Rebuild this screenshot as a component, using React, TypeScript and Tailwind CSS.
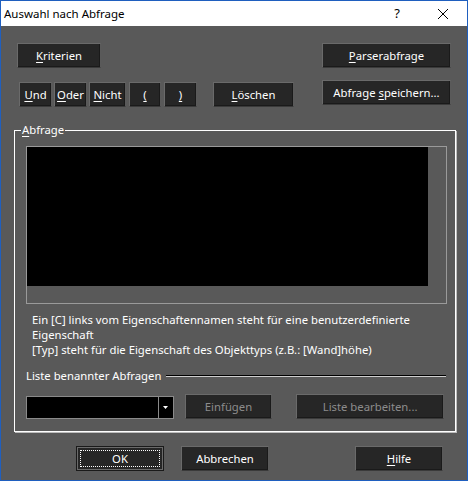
import React from "react";

const U = ({ c }: { c: string }) => <span className="underline underline-offset-2">{c}</span>;

function Btn({ children, className = "", disabled = false }: { children: React.ReactNode; className?: string; disabled?: boolean }) {
  return (
    <div
      className={`flex items-center justify-center bg-[#262626] border border-[#6a6a6a] border-b-[#3a3a3a] border-r-[#5a5a5a] shadow-[inset_-1px_-1px_0_#1a1a1a] ${disabled ? "text-[#8c8c8c]" : "text-white"} ${className}`}
    >
      <span className="whitespace-pre">{children}</span>
    </div>
  );
}

export default function App() {
  return (
    <div className="w-[468px] h-[481px] bg-[#595959] border border-[#1f5fbf] flex flex-col font-['Noto_Sans',sans-serif] text-[11.3px] leading-[15px] text-white overflow-hidden">
      {/* title bar */}
      <div className="h-[25px] bg-white text-black flex items-center pl-[3px] shrink-0">
        <span className="text-[11.5px] flex-1">Auswahl nach Abfrage</span>
        <span className="w-[20px] text-center mr-[30px] text-[13px]">?</span>
        <svg width="12" height="12" viewBox="0 0 12 12" className="mr-[18px]">
          <path d="M1 1 L11 11 M11 1 L1 11" stroke="#000" strokeWidth="1" />
        </svg>
      </div>

      {/* body */}
      <div className="flex flex-col px-[13px]">
        {/* row 1 */}
        <div className="flex justify-between mt-[17px] pl-[3px] pr-[3px]">
          <Btn className="w-[84px] h-[25px]">
            <U c="K" />riterien
          </Btn>
          <Btn className="w-[129px] h-[25px]">
            <U c="P" />arserabfrage
          </Btn>
        </div>
        {/* row 2 */}
        <div className="flex justify-between items-start mt-[12px] pl-[5px] pr-[3px]">
          <div className="flex mt-[2px]">
            <Btn className="w-[33px] h-[25px]"><U c="U" />nd</Btn>
            <Btn className="w-[33px] h-[25px] ml-[2px]"><U c="O" />der</Btn>
            <Btn className="w-[37px] h-[25px] ml-[2px]"><U c="N" />icht</Btn>
            <Btn className="w-[32px] h-[25px] ml-[3px]"><U c="(" /></Btn>
            <Btn className="w-[33px] h-[25px] ml-[3px]"><U c=")" /></Btn>
            <Btn className="w-[81px] h-[25px] ml-[16px]"><U c="L" />öschen</Btn>
          </div>
          <Btn className="w-[129px] h-[25px]">
            Abfrage <U c="s" />peichern...
          </Btn>
        </div>

        {/* group box */}
        <div className="relative mt-[23px] w-[442px] h-[302px] border border-white shadow-[1px_1px_0_#bdbdbd] flex flex-col px-[11px]">
          <div className="absolute left-[6px] top-[-9px] bg-[#595959] px-[1px] leading-[16px]">
            <U c="A" />bfrage
          </div>
          <div className="mt-[15px] w-[421px] h-[158px] border border-[#9a9a9a] shrink-0">
            <div className="w-[401px] h-[139px] bg-black" />
          </div>
          <div className="mt-[8px] pl-[6px] leading-[15px]">
            <div>Ein [C] links vom Eigenschaftennamen steht für eine benutzerdefinierte</div>
            <div>Eigenschaft</div>
            <div>[Typ] steht für die Eigenschaft des Objekttyps (z.B.: [Wand]höhe)</div>
          </div>
          <div className="flex items-center mt-[11px]">
            <span>Liste benannter Abfragen</span>
            <div className="flex-1 ml-[5px] mr-[-2px] h-[2px] bg-black border-b border-[#cfcfcf]" />
          </div>
          <div className="flex items-start mt-[11px]">
            <div className="mt-[2px] w-[149px] h-[23px] flex border border-[#8a8a8a]">
              <div className="flex-1 bg-black" />
              <div className="w-[15px] bg-black border-l border-[#8a8a8a] flex items-center justify-center">
                <svg width="5" height="3" viewBox="0 0 5 3"><path d="M0 0 H5 L2.5 3 Z" fill="#fff" /></svg>
              </div>
            </div>
            <Btn disabled className="ml-[11px] w-[88px] h-[25px]">Einfügen</Btn>
            <Btn disabled className="ml-[24px] w-[149px] h-[25px]">Liste bearbeiten...</Btn>
          </div>
        </div>

        {/* bottom buttons */}
        <div className="flex mt-[14px] pl-[62px]">
          <div className="w-[88px] h-[25px] bg-[#1a1a1a] p-[1px]">
            <div className="w-full h-full bg-[#262626] border border-[#6a6a6a] p-[2px]">
              <div className="w-full h-full border border-dotted border-white flex items-center justify-center">OK</div>
            </div>
          </div>
          <Btn className="ml-[17px] w-[88px] h-[25px]">Abbrechen</Btn>
          <Btn className="ml-[86px] w-[88px] h-[25px]"><U c="H" />ilfe</Btn>
        </div>
      </div>
    </div>
  );
}
